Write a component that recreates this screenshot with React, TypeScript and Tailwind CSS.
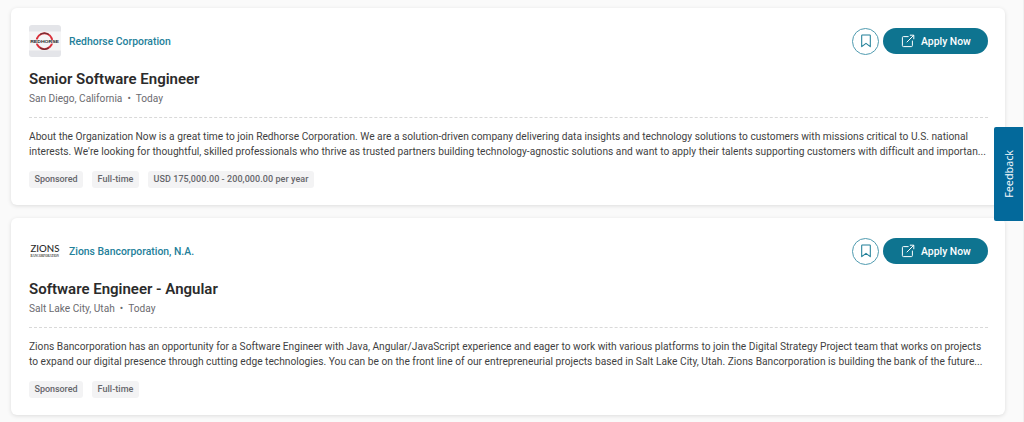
import type { ReactNode } from 'react';

interface Line {
  text: string;
  className: string;
}

interface Job {
  company: string;
  title: string;
  location: string;
  posted: string;
  description: Line[];
  tags: { label: string; className: string }[];
  logo: ReactNode;
}

const RedhorseLogo = () => (
  <svg viewBox="0 0 32 32" className="size-8 rounded-[3px]">
    <rect width="32" height="32" fill="#e4e5e9" />
    <rect y="6.5" width="32" height="19" fill="#f5f5f6" />
    <circle cx="15.4" cy="16.2" r="7.9" fill="none" stroke="#d9303a" strokeWidth="1.9" />
    <path d="M11 9.6a7.9 7.9 0 0 1 8.8 0M11 22.8a7.9 7.9 0 0 0 8.8 0" fill="none" stroke="#6b3035" strokeWidth="1.2" />
    <text
      x="1.2"
      y="18.1"
      textLength="28.8"
      lengthAdjust="spacingAndGlyphs"
      fontFamily="Liberation Sans, sans-serif"
      fontSize="4.4"
      fontWeight="700"
      fill="#26262a"
      stroke="#f5f5f6"
      strokeWidth="0.8"
      paintOrder="stroke"
    >
      REDHORSE
    </text>
  </svg>
);

const ZionsLogo = () => (
  <svg viewBox="0 0 32 32" className="size-8">
    <text
      x="1.5"
      y="17"
      textLength="29"
      lengthAdjust="spacingAndGlyphs"
      fontFamily="Lato, sans-serif"
      fontSize="10"
      fontWeight="500"
      fill="#2c2c2c"
    >
      ZIONS
    </text>
    <text
      x="1.6"
      y="21.6"
      textLength="28.4"
      lengthAdjust="spacingAndGlyphs"
      fontFamily="Liberation Serif, serif"
      fontSize="3.1"
      fontWeight="700"
      fill="#3c3c3c"
    >
      BANCORPORATION
    </text>
  </svg>
);

const BookmarkIcon = () => (
  <svg viewBox="0 0 12 14" className="h-3.5 w-3" fill="none" stroke="#1f7f98" strokeWidth="1.05" strokeLinejoin="round">
    <path d="M2.3 1h7.4a.6.6 0 0 1 .6.6V12.7L6 9.4 1.7 12.7V1.6a.6.6 0 0 1 .6-.6z" />
  </svg>
);

const ExternalIcon = () => (
  <svg viewBox="0 0 14 14" className="size-3.5" fill="none" stroke="#fff" strokeWidth="1" strokeLinecap="round" strokeLinejoin="round">
    <path d="M7.2 2.6H2.4a1 1 0 0 0-1 1v8a1 1 0 0 0 1 1h8a1 1 0 0 0 1-1V7" />
    <path d="M6 8 12.6 1.4M9.2 1.2h3.6v3.6" />
  </svg>
);

const jobs: Job[] = [
  {
    company: 'Redhorse Corporation',
    title: 'Senior Software Engineer',
    location: 'San Diego, California',
    posted: 'Today',
    description: [
      {
        text: 'About the Organization Now is a great time to join Redhorse Corporation. We are a solution-driven company delivering data insights and technology solutions to customers with missions critical to U.S. national',
        className: 'tracking-[-0.001px]',
      },
      {
        text: "interests. We're looking for thoughtful, skilled professionals who thrive as trusted partners building technology-agnostic solutions and want to apply their talents supporting customers with difficult and importan...",
        className: 'tracking-[0.019px]',
      },
    ],
    tags: [
      { label: 'Sponsored', className: 'w-[54px] tracking-[-0.05px]' },
      { label: 'Full-time', className: 'w-[47px] tracking-[0.05px]' },
      { label: 'USD 175,000.00 - 200,000.00 per year', className: 'w-[166px] tracking-[0.067px]' },
    ],
    logo: <RedhorseLogo />,
  },
  {
    company: 'Zions Bancorporation, N.A.',
    title: 'Software Engineer - Angular',
    location: 'Salt Lake City, Utah',
    posted: 'Today',
    description: [
      {
        text: 'Zions Bancorporation has an opportunity for a Software Engineer with Java, Angular/JavaScript experience and eager to work with various platforms to join the Digital Strategy Project team that works on projects',
        className: 'tracking-[0.001px]',
      },
      {
        text: 'to expand our digital presence through cutting edge technologies. You can be on the front line of our entrepreneurial projects based in Salt Lake City, Utah. Zions Bancorporation is building the bank of the future...',
        className: 'tracking-[0.016px]',
      },
    ],
    tags: [
      { label: 'Sponsored', className: 'w-[54px] tracking-[-0.05px]' },
      { label: 'Full-time', className: 'w-[47px] tracking-[0.05px]' },
    ],
    logo: <ZionsLogo />,
  },
];

const JobCard = ({ job }: { job: Job }) => (
  <article className="h-[197px] rounded-md bg-white pt-[17px] pr-[17px] pl-[18px] shadow-[0_1px_4px_rgba(0,0,0,0.12)]">
    <div className="flex items-center justify-between">
      <div className="flex items-center gap-2">
        {job.logo}
        <a href="#" className="pt-0.5 text-[10.4px] font-medium text-[#23809a]">{job.company}</a>
      </div>
      <div className="flex items-center gap-1">
        <button aria-label="Save job" className="flex size-[27px] items-center justify-center rounded-full border border-[#4f9bb0]">
          <BookmarkIcon />
        </button>
        <button className="flex h-[26px] w-[105px] items-center gap-1.5 rounded-full bg-[#0e7490] pl-[18px] text-[10.4px] font-medium text-white">
          <ExternalIcon />
          <span className="pt-px">Apply Now</span>
        </button>
      </div>
    </div>
    <h2 className="mt-3 text-[15px] leading-5 font-semibold text-[#2b2b2b]">{job.title}</h2>
    <div className="mt-[3px] flex gap-[5px] text-[10.15px] leading-[14px] text-[#6b6b70]">
      <span>{job.location}</span>
      <span>•</span>
      <span>{job.posted}</span>
    </div>
    <div className="mt-[11px] border-t border-dashed border-[#d9d9d9]" />
    <div className="mt-3 text-[10.2px] leading-[14.5px] whitespace-nowrap text-[#3f3f42]">
      {job.description.map((line) => (
        <p key={line.text} className={line.className}>{line.text}</p>
      ))}
    </div>
    <div className="mt-3 flex gap-[9px]">
      {job.tags.map((tag) => (
        <span
          key={tag.label}
          className={`flex h-[17px] items-center justify-center rounded-[3px] bg-[#f3f3f4] text-[9px] font-medium whitespace-nowrap text-[#66666b] ${tag.className}`}
        >
          {tag.label}
        </span>
      ))}
    </div>
  </article>
);

export default function App() {
  return (
    <div className="relative h-[422px] overflow-hidden border-r border-[#f0f0f0] bg-[#fafafa] font-[Roboto,sans-serif]">
      <main className="ml-[11px] flex w-[994px] flex-col gap-[13px] pt-2">
        {jobs.map((job) => (
          <JobCard key={job.company} job={job} />
        ))}
      </main>
      <button className="absolute top-[127px] right-0 flex h-[94px] w-[29px] items-center justify-center rounded-l-xs bg-[#03699b] pl-0.5 font-['Open_Sans',sans-serif] text-[10.8px] text-white">
        <span className="rotate-180 [writing-mode:vertical-rl]">Feedback</span>
      </button>
    </div>
  );
}
